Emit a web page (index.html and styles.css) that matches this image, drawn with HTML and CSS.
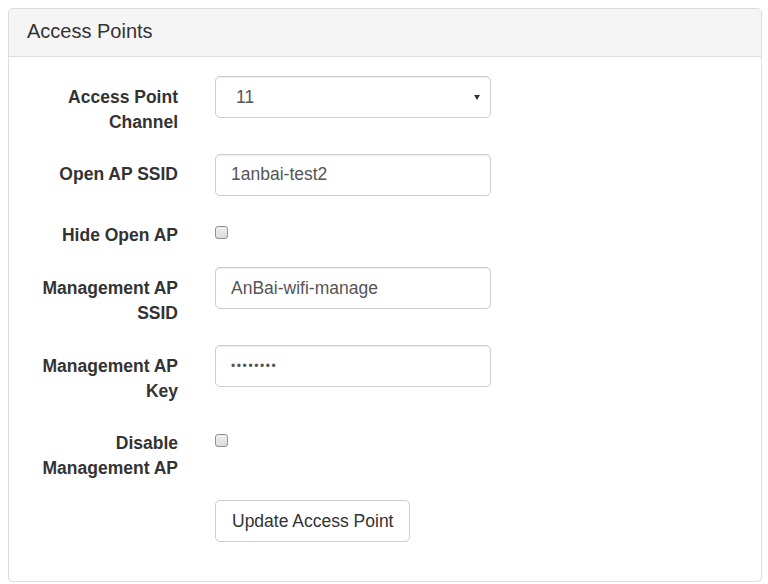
FILE: index.html
```html
<!DOCTYPE html>
<html>
<head>
<meta charset="utf-8">
<link rel="stylesheet" href="styles.css">
</head>
<body>
<div class="panel">
  <div class="panel-heading"><h3 class="panel-title">Access Points</h3></div>
  <div class="panel-body">
    <form class="form">
      <div class="row">
        <label class="label">Access Point Channel</label>
        <div class="field">
          <div class="select-wrap">
            <select class="control select"><option>11</option></select>
          </div>
        </div>
      </div>
      <div class="row">
        <label class="label">Open AP SSID</label>
        <div class="field"><input class="control" type="text" value="1anbai-test2"></div>
      </div>
      <div class="row">
        <label class="label">Hide Open AP</label>
        <div class="field check-field"><input class="check" type="checkbox"></div>
      </div>
      <div class="row">
        <label class="label">Management AP SSID</label>
        <div class="field"><input class="control" type="text" value="AnBai-wifi-manage"></div>
      </div>
      <div class="row">
        <label class="label">Management AP Key</label>
        <div class="field"><input class="control pw" type="password" value="12345678"></div>
      </div>
      <div class="row">
        <label class="label">Disable Management AP</label>
        <div class="field check-field"><input class="check" type="checkbox"></div>
      </div>
      <div class="row">
        <div class="label"></div>
        <div class="field"><button type="button" class="btn">Update Access Point</button></div>
      </div>
    </form>
  </div>
</div>
</body>
</html>
```

FILE: styles.css
```css
html, body {
  margin: 0;
  padding: 0;
  background: #fff;
}
body {
  font-family: "Liberation Sans", Arial, sans-serif;
  color: #333;
  padding: 8px 6px 0 8px;
}
.panel {
  border: 1px solid #ddd;
  border-radius: 5px;
  background: #fff;
  box-shadow: 0 1px 1px rgba(0,0,0,0.05);
}
.panel-heading {
  background: #f5f5f5;
  border-bottom: 1px solid #ddd;
  border-radius: 4px 4px 0 0;
  padding: 11px 18px 13px 18px;
  height: 23px;
}
.panel-title {
  margin: 0;
  font-size: 20px;
  font-weight: normal;
  line-height: 23px;
  color: #333;
}
.panel-body {
  padding: 19px 15px 0 15px;
}
.form {
  display: flex;
  flex-direction: column;
}
.row {
  display: flex;
  align-items: flex-start;
  margin-bottom: 18.95px;
}
.row:last-child {
  margin-bottom: 39px;
}
.label {
  width: 154px;
  flex: none;
  text-align: right;
  font-weight: bold;
  font-size: 17.5px;
  line-height: 25px;
  padding-top: 8.75px;
  margin-right: 37px;
}
.field {
  width: 276px;
  flex: none;
}
.check-field {
  padding-top: 11.5px;
}
.control {
  box-sizing: border-box;
  width: 276px;
  height: 42px;
  border: 1px solid #ccc;
  border-radius: 5px;
  padding: 7px 15px;
  font-family: "Liberation Sans", Arial, sans-serif;
  font-size: 17.5px;
  color: #555;
  background: #fff;
  box-shadow: inset 0 1px 1px rgba(0,0,0,0.075);
  outline: none;
  margin: 0;
  display: block;
}
.pw {
  font-size: 12px;
  letter-spacing: 1.6px;
}
.select-wrap {
  position: relative;
}
.select {
  appearance: none;
  -webkit-appearance: none;
  padding-left: 20px;
}
.select-wrap::after {
  content: "";
  position: absolute;
  right: 11px;
  top: 19px;
  border-left: 3.5px solid transparent;
  border-right: 3.5px solid transparent;
  border-top: 5px solid #333;
  pointer-events: none;
}
.check {
  appearance: none;
  -webkit-appearance: none;
  box-sizing: border-box;
  width: 13px;
  height: 13px;
  margin: 0;
  border: 1px solid #8f8f8f;
  border-radius: 3px;
  background: linear-gradient(#f0f0f0, #dcdcdc);
  display: block;
}
.btn {
  box-sizing: border-box;
  height: 42px;
  padding: 0 16px;
  border: 1px solid #ccc;
  border-radius: 5px;
  background: #fff;
  color: #333;
  font-family: "Liberation Sans", Arial, sans-serif;
  font-size: 17.5px;
  line-height: 25px;
}
```
